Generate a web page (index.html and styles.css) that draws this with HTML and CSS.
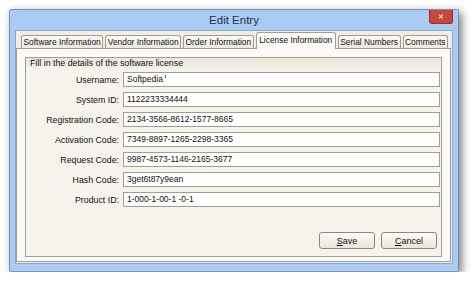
FILE: index.html
```html
<!DOCTYPE html>
<html lang="en">
<head>
    <meta charset="UTF-8">
    <title>Edit Entry</title>
    <link rel="stylesheet" href="styles.css">
</head>
<body>
    <div class="desktop">
        <div class="window">
            <div class="titlebar">
                <span class="title">Edit Entry</span>
                <div class="close">&#10005;</div>
            </div>
            <div class="client">
                <div class="tabs">
                    <div class="tab">Software Information</div>
                    <div class="tab">Vendor Information</div>
                    <div class="tab">Order Information</div>
                    <div class="tab active">License Information</div>
                    <div class="tab">Serial Numbers</div>
                    <div class="tab">Comments</div>
                </div>
                <div class="panel">
                    <div class="group">
                        <div class="group-title">Fill in the details of the software license</div>
                        <div class="rows">
                            <div class="row"><label>Username:</label><div class="field">Softpedia<span class="caret"></span></div></div>
                            <div class="row"><label>System ID:</label><div class="field">1122233334444</div></div>
                            <div class="row"><label>Registration Code:</label><div class="field">2134-3566-8612-1577-8665</div></div>
                            <div class="row"><label>Activation Code:</label><div class="field">7349-8897-1265-2298-3365</div></div>
                            <div class="row"><label>Request Code:</label><div class="field">9987-4573-1146-2165-3677</div></div>
                            <div class="row"><label>Hash Code:</label><div class="field">3get6t87y9ean</div></div>
                            <div class="row"><label>Product ID:</label><div class="field">1-000-1-00-1 -0-1</div></div>
                        </div>
                        <div class="actions">
                            <button class="btn"><u>S</u>ave</button>
                            <button class="btn"><u>C</u>ancel</button>
                        </div>
                    </div>
                </div>
            </div>
        </div>
    </div>
</body>
</html>
```

FILE: styles.css
```css
body {
    margin: 0;
    background-color: #fff;
    font-family: "Liberation Sans", Arial, sans-serif;
    color: #1a1a1a;
}

.desktop {
    padding: 9px 0 0 9px;
}

.window {
    width: 450px;
    height: 263px;
    box-sizing: border-box;
    border: 1px solid #7393bb;
    border-radius: 2px;
    background-color: #a9cdf2;
    display: flex;
    flex-direction: column;
    box-shadow: 3px 3px 8px rgba(0, 0, 0, 0.5);
}

.titlebar {
    height: 20px;
    position: relative;
    display: flex;
    align-items: center;
    justify-content: center;
}

.title {
    font-size: 11.5px;
    color: #1e2f48;
}

.close {
    position: absolute;
    top: 0;
    right: 5px;
    width: 24px;
    height: 14px;
    box-sizing: border-box;
    background-color: #c9463f;
    border: 1px solid #9b302a;
    border-top: none;
    border-radius: 0 0 3px 3px;
    color: #f4dcda;
    font-size: 7px;
    font-weight: bold;
    display: flex;
    align-items: center;
    justify-content: center;
}

.client {
    flex-grow: 1;
    margin: 0 5px 7px 5px;
    border: 1px solid #8ea8c8;
    background-color: #f0ede6;
    padding: 1px 1px 1px 0;
    display: flex;
    flex-direction: column;
}

.tabs {
    display: flex;
    align-items: flex-end;
    gap: 2px;
    height: 16px;
    padding-left: 5px;
}

.tab {
    height: 12px;
    padding: 0 1.5px;
    border: 1px solid #a29d8f;
    border-bottom: none;
    border-radius: 3px 3px 0 0;
    background: linear-gradient(#fdfcfa, #ebe8de);
    font-size: 8.4px;
    line-height: 12px;
    color: #111;
    white-space: nowrap;
}

.tab.active {
    height: 16px;
    line-height: 15px;
    padding: 0 2.5px;
    margin-bottom: -1px;
    background: #fbfaf7;
    position: relative;
    z-index: 1;
}

.panel {
    flex-grow: 1;
    border: 1px solid #a09b8d;
    background-color: #fbfaf7;
    padding: 8px 8px 4px 8px;
    display: flex;
}

.group {
    flex-grow: 1;
    border: 1px solid #a39e90;
    background-color: #f6f3ec;
    display: flex;
    flex-direction: column;
}

.group-title {
    height: 10px;
    line-height: 10px;
    padding-left: 4px;
    font-size: 8.8px;
    color: #111;
    background: linear-gradient(#ebe7dc, #f2efe7);
}

.rows {
    display: flex;
    flex-direction: column;
    gap: 5px;
    padding-top: 4px;
}

.row {
    display: flex;
    align-items: center;
    height: 15px;
}

.row label {
    width: 93px;
    margin-right: 4px;
    text-align: right;
    font-size: 8.8px;
    color: #111;
}

.field {
    flex-grow: 1;
    height: 15px;
    box-sizing: border-box;
    margin-right: 1px;
    border: 1px solid #a39d90;
    background-color: #fff;
    padding-left: 3px;
    font-size: 8.5px;
    line-height: 13px;
    color: #111;
}

.caret {
    display: inline-block;
    width: 1px;
    height: 3px;
    margin-left: 2px;
    vertical-align: top;
    margin-top: 2px;
    background-color: #666;
}

.actions {
    margin-top: auto;
    display: flex;
    justify-content: flex-end;
    gap: 6px;
    padding: 0 4px 7px 0;
}

.btn {
    width: 56px;
    height: 17px;
    padding: 0;
    border: 1px solid #8e8878;
    border-radius: 3px;
    background: linear-gradient(#fbfaf7, #e9e6dc);
    font-family: "Liberation Sans", Arial, sans-serif;
    font-size: 9px;
    color: #111;
}
```
